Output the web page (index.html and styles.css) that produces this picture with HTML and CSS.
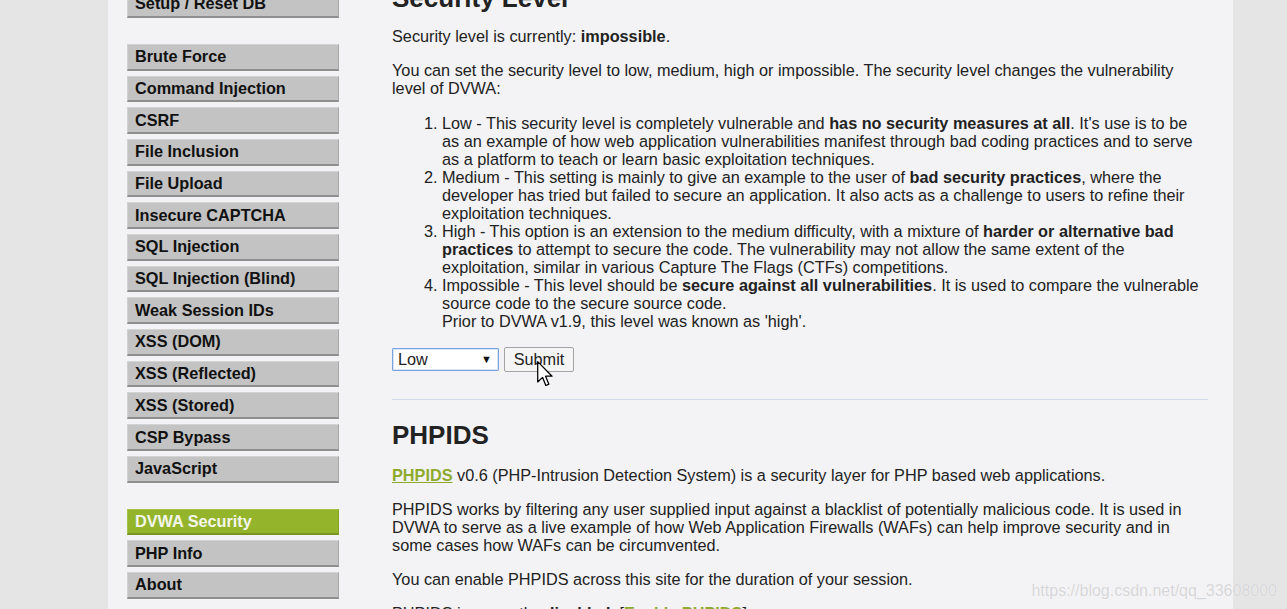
FILE: index.html
```html
<!DOCTYPE html>
<html lang="en">
<head>
<meta charset="utf-8">
<title>DVWA Security</title>
<link rel="stylesheet" href="styles.css">
</head>
<body>
<div class="page">
  <div class="sidebar">
    <ul class="menu-group">
      <li><a class="menu-item" href="#">Setup / Reset DB</a></li>
    </ul>
    <ul class="menu-group">
      <li><a class="menu-item" href="#">Brute Force</a></li>
      <li><a class="menu-item" href="#">Command Injection</a></li>
      <li><a class="menu-item" href="#">CSRF</a></li>
      <li><a class="menu-item" href="#">File Inclusion</a></li>
      <li><a class="menu-item" href="#">File Upload</a></li>
      <li><a class="menu-item" href="#">Insecure CAPTCHA</a></li>
      <li><a class="menu-item" href="#">SQL Injection</a></li>
      <li><a class="menu-item" href="#">SQL Injection (Blind)</a></li>
      <li><a class="menu-item" href="#">Weak Session IDs</a></li>
      <li><a class="menu-item" href="#">XSS (DOM)</a></li>
      <li><a class="menu-item" href="#">XSS (Reflected)</a></li>
      <li><a class="menu-item" href="#">XSS (Stored)</a></li>
      <li><a class="menu-item" href="#">CSP Bypass</a></li>
      <li><a class="menu-item" href="#">JavaScript</a></li>
    </ul>
    <ul class="menu-group">
      <li><a class="menu-item selected" href="#">DVWA Security</a></li>
      <li><a class="menu-item" href="#">PHP Info</a></li>
      <li><a class="menu-item" href="#">About</a></li>
    </ul>
  </div>
  <div class="main">
    <h1 class="title">Security Level</h1>
    <p class="para">Security level is currently: <b>impossible</b>.</p>
    <p class="para">You can set the security level to low, medium, high or impossible. The security level changes the vulnerability level of DVWA:</p>
    <ol class="levels">
      <li>Low - This security level is completely vulnerable and <b>has no security measures at all</b>. It's use is to be as an example of how web application vulnerabilities manifest through bad coding practices and to serve as a platform to teach or learn basic exploitation techniques.</li>
      <li>Medium - This setting is mainly to give an example to the user of <b>bad security practices</b>, where the developer has tried but failed to secure an application. It also acts as a challenge to users to refine their exploitation techniques.</li>
      <li>High - This option is an extension to the medium difficulty, with a mixture of <b>harder or alternative bad practices</b> to attempt to secure the code. The vulnerability may not allow the same extent of the exploitation, similar in various Capture The Flags (CTFs) competitions.</li>
      <li>Impossible - This level should be <b>secure against all vulnerabilities</b>. It is used to compare the vulnerable source code to the secure source code.<br>Prior to DVWA v1.9, this level was known as 'high'.</li>
    </ol>
    <form class="level-form">
      <div class="select-wrap">
        <select class="level-select" name="security">
          <option>Low</option>
          <option>Medium</option>
          <option>High</option>
          <option>Impossible</option>
        </select>
        <span class="select-arrow">&#9660;</span>
      </div>
      <div class="submit-wrap">
        <button type="button" class="submit-btn">Submit</button>
        <svg class="cursor" width="16" height="26" viewBox="0 0 12.5 20.5">
          <path d="M0.5 0.5 L0.5 16.5 L4.3 12.9 L6.9 19.3 L9.3 18.3 L6.7 12 L11.8 12 Z" fill="#fff" stroke="#000" stroke-width="1" stroke-linejoin="round"/>
        </svg>
      </div>
    </form>
    <hr class="divider">
    <h2 class="title">PHPIDS</h2>
    <p class="para"><a class="link" href="#">PHPIDS</a> v0.6 (PHP-Intrusion Detection System) is a security layer for PHP based web applications.</p>
    <p class="para">PHPIDS works by filtering any user supplied input against a blacklist of potentially malicious code. It is used in DVWA to serve as a live example of how Web Application Firewalls (WAFs) can help improve security and in some cases how WAFs can be circumvented.</p>
    <p class="para">You can enable PHPIDS across this site for the duration of your session.</p>
    <p class="para">PHPIDS is currently: <b>disabled</b>. [<a class="link" href="#">Enable PHPIDS</a>]</p>
  </div>
</div>
<div class="watermark">https://blog.csdn.net/qq_33608000</div>
</body>
</html>
```
FILE: styles.css
```css
html, body {
  margin: 0;
  padding: 0;
  height: 609px;
  overflow: hidden;
}

body {
  background: #e5e5e5;
  font-family: "Liberation Sans", Arial, sans-serif;
  font-size: 16.25px;
  color: #222;
  position: relative;
}

.page {
  margin-top: -30px;
  margin-left: 108px;
  width: 1125px;
  height: 700px;
  background: #f3f3f5;
  display: flex;
}

.sidebar {
  padding-left: 19px;
  padding-top: 21px;
  width: 212px;
}

.menu-group {
  list-style: none;
  margin: 0 0 26.23px 0;
  padding: 0;
}

.menu-group li {
  margin-bottom: 5px;
}

.menu-item {
  display: flex;
  align-items: center;
  box-sizing: border-box;
  height: 26.7px;
  padding-left: 7px;
  background: #c3c3c3;
  border-top: 1px solid #d4d4d4;
  border-left: 1px solid #d0d0d0;
  border-right: 1px solid #a8a8a8;
  border-bottom: 2px solid #8e8e8e;
  color: #111;
  font-weight: bold;
  font-size: 16.25px;
  text-decoration: none;
  white-space: nowrap;
}

.menu-item.selected {
  background: #93b42b;
  border-top-color: #a4c24a;
  border-left-color: #a4c24a;
  border-right-color: #86a326;
  border-bottom-color: #7a9422;
  color: #f4f6ec;
}

.main {
  margin-left: 53px;
  width: 816px;
  padding-top: 13.4px;
}

.title {
  font-size: 26px;
  line-height: 30px;
  font-weight: bold;
  color: #222;
  margin: 0;
}

h1.title {
  margin-bottom: 13.6px;
}

h2.title {
  margin-bottom: 16px;
}

.para {
  margin: 0 0 16px 0;
  line-height: 18px;
}

.levels {
  margin: 17px 4px 17px 0;
  padding-left: 50px;
  line-height: 18px;
}

.level-form {
  display: flex;
  align-items: center;
  gap: 5px;
  height: 25px;
}

.select-wrap {
  display: grid;
  width: 107px;
  height: 23px;
}

.level-select {
  grid-area: 1 / 1;
  appearance: none;
  -webkit-appearance: none;
  box-sizing: border-box;
  width: 107px;
  height: 23px;
  margin: 0;
  padding: 0 0 0 5px;
  background: #fff;
  border: 1px solid #78a4de;
  border-radius: 1px;
  box-shadow: inset 0 0 0 1px #d7e5f7;
  font-family: "Liberation Sans", Arial, sans-serif;
  font-size: 16.25px;
  color: #222;
  outline: none;
}

.select-arrow {
  grid-area: 1 / 1;
  justify-self: end;
  align-self: center;
  margin-right: 7px;
  font-size: 11px;
  color: #111;
  pointer-events: none;
}

.submit-wrap {
  position: relative;
}

.submit-btn {
  display: block;
  box-sizing: border-box;
  width: 70px;
  height: 25px;
  margin: 0;
  padding: 0;
  background: #f5f5f5;
  border: 1px solid #a3a3a3;
  border-radius: 2px;
  font-family: "Liberation Sans", Arial, sans-serif;
  font-size: 16.25px;
  color: #222;
}

.cursor {
  position: absolute;
  left: 33px;
  top: 14px;
}

.divider {
  border: 0;
  border-top: 1px solid #cfdbea;
  margin: 27px 0 20.5px 0;
  height: 0;
}

.link {
  color: #8eaa2c;
  font-weight: bold;
  text-decoration: underline;
}

.watermark {
  position: absolute;
  right: 10px;
  top: 581px;
  font-size: 16px;
  line-height: 20px;
  color: #d6d6d8;
  text-shadow: 0 0 1px #fff;
  white-space: nowrap;
}
```
